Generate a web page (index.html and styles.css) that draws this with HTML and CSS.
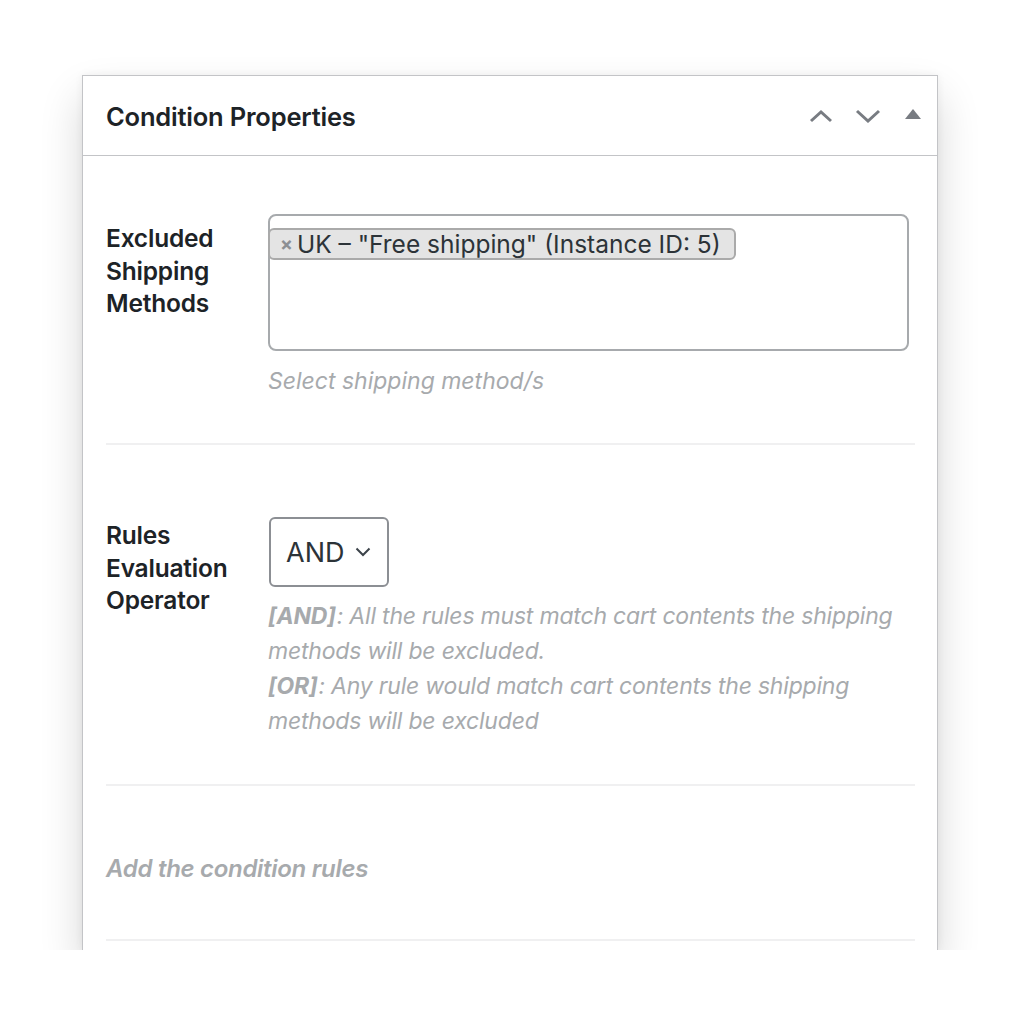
FILE: index.html
```html
<!DOCTYPE html>
<html lang="en">
<head>
    <meta charset="UTF-8">
    <meta name="viewport" content="width=device-width, initial-scale=1.0">
    <title>Condition Properties</title>
    <link rel="stylesheet" href="styles.css">
</head>
<body>
    <div class="postbox">
        <div class="postbox-header">
            <h2>Condition Properties</h2>
            <div class="handle-actions">
                <button class="handle-btn" aria-label="Move up">
                    <svg width="24" height="14" viewBox="0 0 24 14"><path d="M2 12 L12 3 L22 12" fill="none" stroke="#787c82" stroke-width="3"/></svg>
                </button>
                <button class="handle-btn" aria-label="Move down">
                    <svg width="26" height="14" viewBox="0 0 26 14"><path d="M2 2 L13 12 L24 2" fill="none" stroke="#787c82" stroke-width="3"/></svg>
                </button>
                <button class="handle-btn toggle-btn" aria-label="Toggle panel">
                    <svg width="16" height="10" viewBox="0 0 16 10"><path d="M8 0 L16 10 L0 10 Z" fill="#787c82"/></svg>
                </button>
            </div>
        </div>

        <div class="inside">
            <div class="field-row row-methods">
                <div class="field-label">Excluded Shipping Methods</div>
                <div class="field-input">
                    <div class="multi-select">
                        <span class="choice"><span class="choice-remove">×</span>UK – "Free shipping" (Instance ID: 5)</span>
                    </div>
                    <p class="description">Select shipping method/s</p>
                </div>
            </div>

            <div class="field-row row-operator">
                <div class="field-label">Rules Evaluation Operator</div>
                <div class="field-input">
                    <div class="select-box">
                        AND
                        <svg width="16" height="10" viewBox="0 0 16 10"><path d="M1.5 1.5 L8 8 L14.5 1.5" fill="none" stroke="#3c434a" stroke-width="2"/></svg>
                    </div>
                    <p class="description desc-long"><strong>[AND]</strong>: All the rules must match cart contents the shipping methods will be excluded.<br><strong>[OR]</strong>: Any rule would match cart contents the shipping methods will be excluded</p>
                </div>
            </div>

            <div class="field-row row-rules">
                <p class="rules-empty">Add the condition rules</p>
            </div>
        </div>
    </div>
</body>
</html>
```

FILE: styles.css
```css
* {
    margin: 0;
    padding: 0;
    box-sizing: border-box;
}

body {
    background-color: #ffffff;
    font-family: Inter, Roboto, "Liberation Sans", sans-serif;
    color: #1d2327;
}

.postbox {
    width: 856px;
    height: 875px;
    margin: 75px 0 0 82px;
    background-color: #ffffff;
    border: 1px solid #c3c4c7;
    border-bottom: none;
    overflow: hidden;
    box-shadow: 0 22px 40px rgba(0, 0, 0, 0.16), 0 0 8px rgba(0, 0, 0, 0.06);
}

.postbox-header {
    height: 80px;
    display: flex;
    align-items: center;
    justify-content: space-between;
    padding: 0 16px 0 23px;
    border-bottom: 1px solid #c3c4c7;
}

.postbox-header h2 {
    font-size: 25.5px;
    font-weight: 600;
    letter-spacing: -0.2px;
    padding-top: 2px;
}

.handle-actions {
    display: flex;
    align-items: center;
    gap: 22px;
}

.handle-btn {
    background: none;
    border: none;
    display: flex;
    align-items: center;
    cursor: pointer;
}

.toggle-btn {
    margin-left: 2px;
    margin-bottom: 3px;
}

.inside {
    padding: 0 22px 0 23px;
}

.field-row {
    display: flex;
    border-bottom: 2px solid #f0f0f1;
}

.field-label {
    width: 162px;
    flex-shrink: 0;
    font-size: 24.5px;
    font-weight: 600;
    line-height: 32.5px;
    padding-right: 10px;
    letter-spacing: -0.2px;
}

.field-input {
    flex: 1;
}

.row-methods {
    padding: 58px 0 44px;
}

.row-methods .field-label {
    padding-top: 8px;
}

.multi-select {
    width: 641px;
    height: 137px;
    border: 2px solid #a7aaad;
    border-radius: 8px;
    padding: 12px 0 0 0;
}

.choice {
    display: inline-flex;
    align-items: center;
    height: 32px;
    margin-left: -2px;
    padding: 0 13px 0 10px;
    background-color: #e4e4e4;
    border: 2px solid #aaaaaa;
    border-radius: 6px;
    font-size: 24.5px;
    color: #2c3338;
    letter-spacing: 0;
}

.choice-remove {
    color: #8c8f94;
    font-weight: 700;
    font-size: 19px;
    margin-right: 4px;
}

.description {
    font-size: 23px;
    font-style: italic;
    color: #a7aaad;
    line-height: 35px;
    margin-top: 13px;
}

.description strong {
    font-weight: 700;
    padding-right: 1px;
}

.row-operator {
    padding: 72px 0 45px;
}

.row-operator .field-label {
    padding-top: 2px;
}

.select-box {
    display: inline-flex;
    align-items: center;
    gap: 11px;
    width: 120px;
    height: 70px;
    margin-left: 1px;
    padding: 0 15px;
    border: 2px solid #8c8f94;
    border-radius: 6px;
    font-size: 27px;
    color: #2c3338;
}

.desc-long {
    margin-top: 12px;
    letter-spacing: -0.2px;
}

.row-rules {
    padding: 65px 0 53px;
}

.rules-empty {
    font-size: 24px;
    font-weight: 600;
    font-style: italic;
    color: #a7aaad;
    line-height: 35px;
    letter-spacing: -0.3px;
}
```
